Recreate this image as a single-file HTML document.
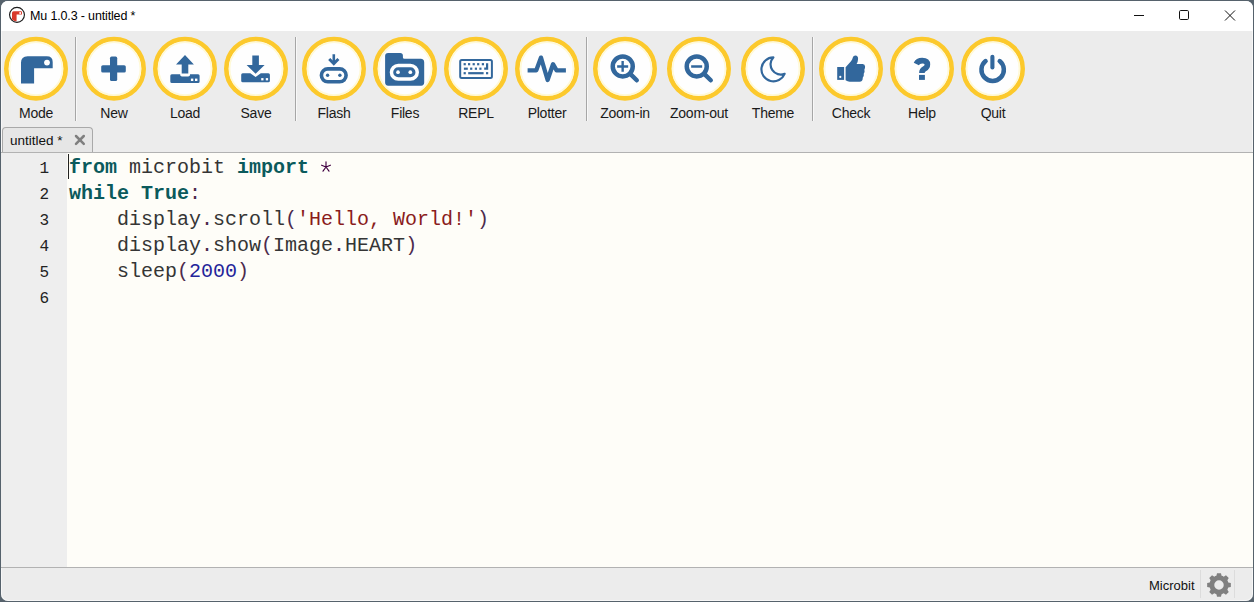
<!DOCTYPE html>
<html><head><meta charset="utf-8">
<style>
*{margin:0;padding:0;box-sizing:border-box}
html,body{width:1254px;height:602px;overflow:hidden;background:#56626c;font-family:"Liberation Sans",sans-serif}
#win{position:absolute;left:1px;top:1px;width:1252px;height:600px;background:#ececec;border-radius:7px;overflow:hidden;box-shadow:inset 0 0 0 1px rgba(255,255,255,0.6)}
#pg{position:absolute;left:-1px;top:-1px;width:1254px;height:602px}
.abs{position:absolute}
#title{position:absolute;left:0;top:0;width:1254px;height:31px;background:#fff}
#title .t{position:absolute;left:30px;top:9px;font-size:12.5px;letter-spacing:-0.15px;color:#000;white-space:nowrap}
.lbl{position:absolute;top:105px;width:100px;margin-left:-50px;text-align:center;font-size:14px;line-height:16px;letter-spacing:-0.25px;color:#1a1a1a;white-space:nowrap}
.sep{position:absolute;top:37px;width:2px;height:84px;border-left:1px solid #a6a6a6;border-right:1px solid #f8f8f8}
#tab{position:absolute;left:2px;top:127px;width:91px;height:26px;background:#e6e6e6;border:1px solid #a9a9a9;border-bottom:none;border-radius:4px 4px 0 0}
#tab .t{position:absolute;left:7px;top:5px;font-size:13.5px;color:#111}
#edline{position:absolute;left:0;top:152px;width:1254px;height:1px;background:#b2b2b2}
#margin{position:absolute;left:0;top:153px;width:67px;height:414px;background:#eeeeee}
#editor{position:absolute;left:67px;top:153px;width:1187px;height:414px;background:#fefdf8}
#botline{position:absolute;left:0;top:567px;width:1254px;height:1px;background:#b2b2b2}
.ln{position:absolute;left:0;width:49px;text-align:right;font-family:"Liberation Mono",monospace;font-size:16px;line-height:18px;color:#222}
.code{position:absolute;left:69px;font-family:"Liberation Mono",monospace;font-size:20px;line-height:26px;color:#353535;white-space:pre}
.kw{color:#0b5a5c;font-weight:bold}
.op{color:#4c2a4c}
.st{color:#8a1c1c}
.nm{color:#24249a}
#cursor{position:absolute;left:68px;top:154px;width:1px;height:25px;background:#222}
#status .t{position:absolute;left:1149px;top:578px;font-size:13px;color:#111}
.ssep{position:absolute;top:570px;width:1px;height:28px;background:#dcdcdc}
</style></head><body>
<div id="win"><div id="pg">
  <div id="title">
    <svg class="abs" style="left:8px;top:6px" width="18" height="18" viewBox="0 0 18 18">
      <circle cx="9" cy="8.85" r="7.45" fill="#fff" stroke="#1e1e1e" stroke-width="1.15"/>
      <clipPath id="muc"><circle cx="9" cy="8.85" r="6.7"/></clipPath>
      <path clip-path="url(#muc)" d="M4 15.4V7Q4 5.3 5.7 5.3H13Q14 5.3 14 6.3V8.6H8.6V15.4Z" fill="#d8392b"/>
      <circle cx="12.2" cy="7.1" r="1" fill="#fff"/>
    </svg>
    <div class="t">Mu 1.0.3 - untitled *</div>
    <svg class="abs" style="left:1130px;top:8px" width="110" height="14" viewBox="0 0 110 14">
      <path d="M4 7.5H14" stroke="#111" stroke-width="1"/>
      <rect x="49.5" y="2.5" width="9" height="9" rx="1.2" fill="none" stroke="#111" stroke-width="1"/>
      <path d="M95 2.5L105 12.5M105 2.5L95 12.5" stroke="#111" stroke-width="1"/>
    </svg>
  </div>
  <svg class="abs" style="left:0;top:0" width="1254" height="130" viewBox="0 0 1254 130"><circle cx="36" cy="68.7" r="29.7" fill="#fefefe" stroke="#fcc92c" stroke-width="4.6"/><circle cx="36" cy="68.7" r="26.4" fill="none" stroke="#fff6c4" stroke-width="1.6" opacity="0.7"/><path d="M21 83.5V62.8Q21 56.2 27.6 56.2H46.8Q52.7 56.2 52.7 62.1V68.3H34.1V83.5Z" fill="#32679c"/><circle cx="47" cy="62.6" r="2.9" fill="#fff"/><circle cx="114" cy="68.7" r="29.7" fill="#fefefe" stroke="#fcc92c" stroke-width="4.6"/><circle cx="114" cy="68.7" r="26.4" fill="none" stroke="#fff6c4" stroke-width="1.6" opacity="0.7"/><rect x="101.2" y="65.2" width="24.6" height="7.3" rx="1.6" fill="#32679c"/><rect x="110" y="56.6" width="7.2" height="24.4" rx="1.6" fill="#32679c"/><circle cx="185" cy="68.7" r="29.7" fill="#fefefe" stroke="#fcc92c" stroke-width="4.6"/><circle cx="185" cy="68.7" r="26.4" fill="none" stroke="#fff6c4" stroke-width="1.6" opacity="0.7"/><path d="M170.3 75.8Q170.3 74.3 171.8 74.3H180.2V75Q180.2 76.4 182 76.4H188.2Q190 76.4 190 75V74.3H198.1Q199.6 74.3 199.6 75.8V81.4Q199.6 82.9 198.1 82.9H171.8Q170.3 82.9 170.3 81.4Z" fill="#32679c"/><path d="M185 55L193.9 64.6H188.3V73.6H181.7V64.6H176Z" fill="#32679c"/><rect x="190.9" y="78.6" width="2.4" height="2.4" fill="#fff"/><rect x="195" y="78.6" width="2.4" height="2.4" fill="#fff"/><circle cx="256" cy="68.7" r="29.7" fill="#fefefe" stroke="#fcc92c" stroke-width="4.6"/><circle cx="256" cy="68.7" r="26.4" fill="none" stroke="#fff6c4" stroke-width="1.6" opacity="0.7"/><path d="M241.2 74.8Q241.2 73.3 242.7 73.3H250.3L255.6 77L260.8 73.3H268.4Q269.9 73.3 269.9 74.8V80.7Q269.9 82.2 268.4 82.2H242.7Q241.2 82.2 241.2 80.7Z" fill="#32679c"/><path d="M252.3 55.6H258.9V65H264.6L255.6 73.8L246.6 65H252.3Z" fill="#32679c"/><rect x="261.2" y="78.1" width="2.3" height="2.3" fill="#fff"/><rect x="265.8" y="78.1" width="2.3" height="2.3" fill="#fff"/><circle cx="334" cy="68.7" r="29.7" fill="#fefefe" stroke="#fcc92c" stroke-width="4.6"/><circle cx="334" cy="68.7" r="26.4" fill="none" stroke="#fff6c4" stroke-width="1.6" opacity="0.7"/><rect x="321.4" y="68.9" width="24.7" height="12.9" rx="6.45" fill="none" stroke="#32679c" stroke-width="3.6"/><circle cx="327.6" cy="75.3" r="1.7" fill="#32679c"/><circle cx="339.9" cy="75.3" r="1.7" fill="#32679c"/><path d="M333.8 54.3V63" stroke="#32679c" stroke-width="2.6"/><path d="M329.2 59L333.8 63.6L338.4 59" fill="none" stroke="#32679c" stroke-width="2.9"/><circle cx="405" cy="68.7" r="29.7" fill="#fefefe" stroke="#fcc92c" stroke-width="4.6"/><circle cx="405" cy="68.7" r="26.4" fill="none" stroke="#fff6c4" stroke-width="1.6" opacity="0.7"/><path d="M385.1 56Q385.1 52.9 388.2 52.9H400.2Q402.9 52.9 402.9 55.6V57.2Q402.9 58.8 404.5 58.8H420.6Q424.2 58.8 424.2 62.4Q424.2 58.8 424.2 61.9V82.6Q424.2 85.7 421.1 85.7H388.2Q385.1 85.7 385.1 82.6Z" fill="#32679c"/><rect x="391.45" y="65.45" width="25.8" height="13.6" rx="6.8" fill="none" stroke="#fff" stroke-width="3.5"/><circle cx="398" cy="72.2" r="1.85" fill="#fff"/><circle cx="410.3" cy="72.2" r="1.85" fill="#fff"/><circle cx="476" cy="68.7" r="29.7" fill="#fefefe" stroke="#fcc92c" stroke-width="4.6"/><circle cx="476" cy="68.7" r="26.4" fill="none" stroke="#fff6c4" stroke-width="1.6" opacity="0.7"/><rect x="460.2" y="60" width="31.7" height="17.9" rx="1.5" fill="none" stroke="#32679c" stroke-width="2"/><rect x="463.59999999999997" y="63.1" width="2.2" height="2.2" fill="#32679c"/><rect x="468.0" y="63.1" width="2.2" height="2.2" fill="#32679c"/><rect x="472.59999999999997" y="63.1" width="2.2" height="2.2" fill="#32679c"/><rect x="477.09999999999997" y="63.1" width="2.2" height="2.2" fill="#32679c"/><rect x="481.79999999999995" y="63.1" width="2.2" height="2.2" fill="#32679c"/><rect x="470.09999999999997" y="67.6" width="2.2" height="2.2" fill="#32679c"/><rect x="474.79999999999995" y="67.6" width="2.2" height="2.2" fill="#32679c"/><rect x="479.29999999999995" y="67.6" width="2.2" height="2.2" fill="#32679c"/><rect x="463.9" y="67.6" width="3.9" height="2.2" fill="#32679c"/><path d="M484.2 68.7H487.1V63.3" fill="none" stroke="#32679c" stroke-width="2.2"/><rect x="463.6" y="72.1" width="2.2" height="2.2" fill="#32679c"/><rect x="468.2" y="72.1" width="15.4" height="2.2" fill="#32679c"/><rect x="486" y="72.1" width="2.2" height="2.2" fill="#32679c"/><circle cx="547" cy="68.7" r="29.7" fill="#fefefe" stroke="#fcc92c" stroke-width="4.6"/><circle cx="547" cy="68.7" r="26.4" fill="none" stroke="#fff6c4" stroke-width="1.6" opacity="0.7"/><path d="M527.6 70.3H536.3L541 57.6L547.6 80L553 64.2L556.6 70.3H565.9" fill="none" stroke="#32679c" stroke-width="4.3" stroke-linejoin="round"/><circle cx="625" cy="68.7" r="29.7" fill="#fefefe" stroke="#fcc92c" stroke-width="4.6"/><circle cx="625" cy="68.7" r="26.4" fill="none" stroke="#fff6c4" stroke-width="1.6" opacity="0.7"/><circle cx="622.75" cy="66.45" r="10" fill="none" stroke="#32679c" stroke-width="4.5"/><path d="M630.25 73.95L636.75 80.25" stroke="#32679c" stroke-width="4.5" stroke-linecap="round"/><path d="M617.15 66.45H628.15" stroke="#32679c" stroke-width="2.4"/><path d="M622.65 61.050000000000004V71.85000000000001" stroke="#32679c" stroke-width="2.4"/><circle cx="699" cy="68.7" r="29.7" fill="#fefefe" stroke="#fcc92c" stroke-width="4.6"/><circle cx="699" cy="68.7" r="26.4" fill="none" stroke="#fff6c4" stroke-width="1.6" opacity="0.7"/><circle cx="696.75" cy="66.45" r="10" fill="none" stroke="#32679c" stroke-width="4.5"/><path d="M704.25 73.95L710.75 80.25" stroke="#32679c" stroke-width="4.5" stroke-linecap="round"/><path d="M691.15 66.45H702.15" stroke="#32679c" stroke-width="2.4"/><circle cx="773" cy="68.7" r="29.7" fill="#fefefe" stroke="#fcc92c" stroke-width="4.6"/><circle cx="773" cy="68.7" r="26.4" fill="none" stroke="#fff6c4" stroke-width="1.6" opacity="0.7"/><path d="M773.3 57.4A12 12 0 1 0 784.6 73.8A10.2 10.2 0 0 1 773.3 57.4Z" fill="none" stroke="#32679c" stroke-width="2.2" stroke-linejoin="round"/><circle cx="851" cy="68.7" r="29.7" fill="#fefefe" stroke="#fcc92c" stroke-width="4.6"/><circle cx="851" cy="68.7" r="26.4" fill="none" stroke="#fff6c4" stroke-width="1.6" opacity="0.7"/><rect x="837.2" y="67" width="6.9" height="12.9" fill="#32679c"/><circle cx="840.3" cy="76.9" r="1.1" fill="#fff"/><path d="M845.6 67.3L851 61.2Q852.6 59.2 852.8 57.6Q853.3 55.6 855.4 55.6Q858.2 55.8 858.1 59Q858 61.6 856.6 64H862.6Q865.1 64.2 865.1 66.8Q865.1 68.6 864.4 69.6Q865 71.8 863.8 73.4Q864.2 75.8 862.8 77.4Q862.8 81.7 859.6 81.7H849.6Q847.6 81.7 845.6 80.3Z" fill="#32679c"/><circle cx="922" cy="68.7" r="29.7" fill="#fefefe" stroke="#fcc92c" stroke-width="4.6"/><circle cx="922" cy="68.7" r="26.4" fill="none" stroke="#fff6c4" stroke-width="1.6" opacity="0.7"/><path d="M916.3 64Q917.8 60.6 922.2 60.6Q927.4 60.6 927.4 64.6Q927.4 67.3 924.6 68.8Q921.9 70.2 921.9 72.9" fill="none" stroke="#32679c" stroke-width="5.6"/><rect x="919" y="74.9" width="5.9" height="5" fill="#32679c"/><circle cx="993" cy="68.7" r="29.7" fill="#fefefe" stroke="#fcc92c" stroke-width="4.6"/><circle cx="993" cy="68.7" r="26.4" fill="none" stroke="#fff6c4" stroke-width="1.6" opacity="0.7"/><path d="M985.6 61.05A11.2 11.2 0 1 0 999.7 61.05" fill="none" stroke="#32679c" stroke-width="4.5" stroke-linecap="round"/><path d="M992.4 56.8V67.4" stroke="#32679c" stroke-width="4.1" stroke-linecap="round"/></svg><div class="lbl" style="left:36px">Mode</div><div class="lbl" style="left:114px">New</div><div class="lbl" style="left:185px">Load</div><div class="lbl" style="left:256px">Save</div><div class="lbl" style="left:334px">Flash</div><div class="lbl" style="left:405px">Files</div><div class="lbl" style="left:476px">REPL</div><div class="lbl" style="left:547px">Plotter</div><div class="lbl" style="left:625px">Zoom-in</div><div class="lbl" style="left:699px">Zoom-out</div><div class="lbl" style="left:773px">Theme</div><div class="lbl" style="left:851px">Check</div><div class="lbl" style="left:922px">Help</div><div class="lbl" style="left:993px">Quit</div><div class="sep" style="left:75px"></div><div class="sep" style="left:295px"></div><div class="sep" style="left:586px"></div><div class="sep" style="left:812px"></div>
  <div id="tab"><span class="t">untitled *</span>
    <svg class="abs" style="left:71px;top:6px" width="12" height="12" viewBox="0 0 12 12"><path d="M2 2L9.8 9.8M9.8 2L2 9.8" stroke="#7f7f7f" stroke-width="2.5" stroke-linecap="round"/></svg>
  </div>
  <div id="edline"></div>
  <div id="margin"></div>
  <div id="editor"></div>
  <div class="ln" style="top:160px">1</div>
  <div class="ln" style="top:186px">2</div>
  <div class="ln" style="top:212px">3</div>
  <div class="ln" style="top:238px">4</div>
  <div class="ln" style="top:264px">5</div>
  <div class="ln" style="top:290px">6</div>
  <div class="code" style="top:155px"><span class="kw">from</span> microbit <span class="kw">import</span>  
<span class="kw">while</span> <span class="kw">True</span><span class="op">:</span>
    display<span class="op">.</span>scroll<span class="op">(</span><span class="st">'Hello, World!'</span><span class="op">)</span>
    display<span class="op">.</span>show<span class="op">(</span>Image<span class="op">.</span>HEART<span class="op">)</span>
    sleep<span class="op">(</span><span class="nm">2000</span><span class="op">)</span>
</div>
  <div id="cursor"></div>
  <svg class="abs" style="left:318px;top:158px" width="16" height="16" viewBox="318 158 16 16"><path d="M326 161.8V167M326 167L321.6 165.2M326 167L330.4 165.2M326 167L323 171.2M326 167L329 171.2" stroke="#400040" stroke-width="1.15" stroke-linecap="round"/></svg>
  <div id="botline"></div>
  <div id="status">
    <div class="t">Microbit</div>
    <div class="ssep" style="left:1200px"></div>
    <div class="ssep" style="left:1234px"></div>
    <svg class="abs" style="left:1207px;top:573px" width="24" height="24" viewBox="0 0 24 24">
      <path fill="#808080" fill-rule="evenodd" d="M9.40 2.76L10.03 0.16L13.97 0.16L14.60 2.76A9.6 9.6 0 0 1 16.70 3.63L18.97 2.24L21.76 5.03L20.37 7.30A9.6 9.6 0 0 1 21.24 9.40L23.84 10.03L23.84 13.97L21.24 14.60A9.6 9.6 0 0 1 20.37 16.70L21.76 18.97L18.97 21.76L16.70 20.37A9.6 9.6 0 0 1 14.60 21.24L13.97 23.84L10.03 23.84L9.40 21.24A9.6 9.6 0 0 1 7.30 20.37L5.03 21.76L2.24 18.97L3.63 16.70A9.6 9.6 0 0 1 2.76 14.60L0.16 13.97L0.16 10.03L2.76 9.40A9.6 9.6 0 0 1 3.63 7.30L2.24 5.03L5.03 2.24L7.30 3.63A9.6 9.6 0 0 1 9.40 2.76ZM12 7.25a4.75 4.75 0 1 0 0 9.5a4.75 4.75 0 1 0 0-9.5z"/>
    </svg>
  </div>
</div></div>
</body></html>
